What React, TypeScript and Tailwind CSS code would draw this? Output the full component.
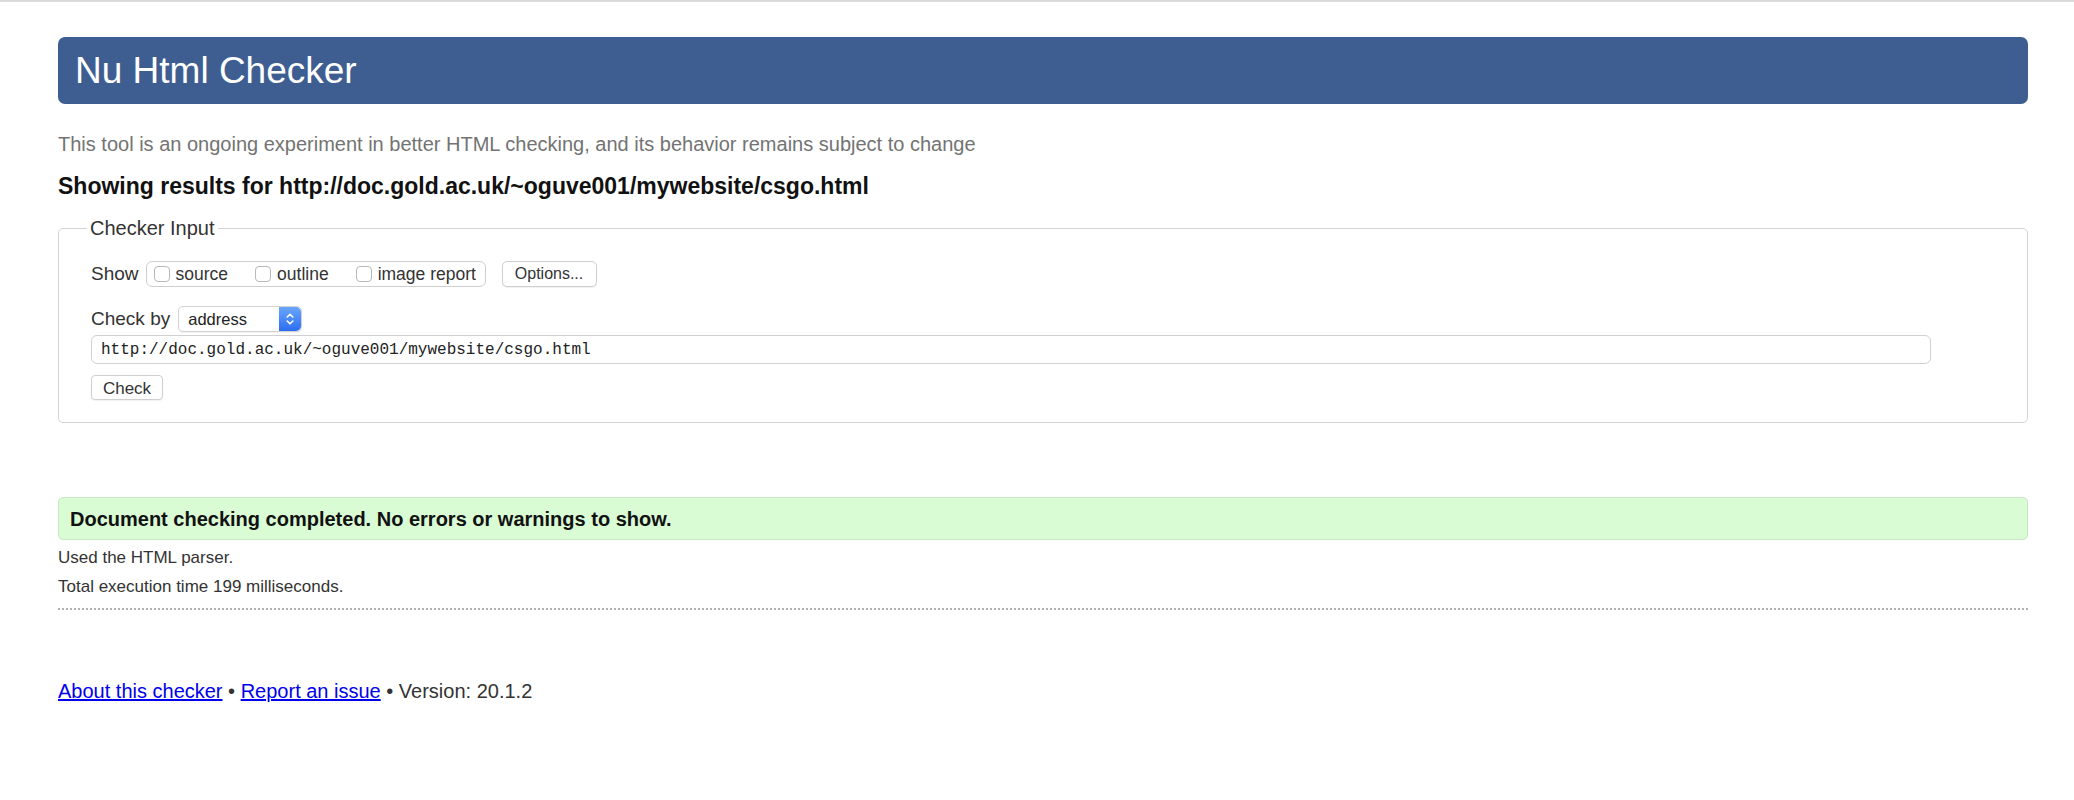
import { useState } from 'react';

const URL = 'http://doc.gold.ac.uk/~oguve001/mywebsite/csgo.html';

function Box({ label }: { label: string }) {
  return (
    <label className="flex items-center gap-[6px]">
      <span className="h-[16px] w-[16px] rounded-[4px] border border-[#b9b9b9] bg-white" />
      <span>{label}</span>
    </label>
  );
}

function Stepper() {
  return (
    <span className="flex h-full w-[22px] items-center justify-center rounded-r-[5px] bg-gradient-to-b from-[#6aa6fb] to-[#2c6cf0]">
      <svg width="8" height="14" viewBox="0 0 8 14" fill="none" stroke="white" strokeWidth={1.6} strokeLinecap="round" strokeLinejoin="round">
        <path d="M1.2 5L4 2.2 6.8 5" />
        <path d="M1.2 9L4 11.8 6.8 9" />
      </svg>
    </span>
  );
}

export default function App() {
  const [url] = useState(URL);

  return (
    <div className="min-h-screen bg-white font-['Liberation_Sans',Arial,sans-serif] text-[#222]">
      <div className="h-[2px] bg-[#dadada]" />

      <div className="ml-[58px] w-[1970px] pt-[35px]">
        {/* Title bar */}
        <h1 className="flex h-[67px] items-center rounded-[7px] bg-[#3e5e91] pl-[17px] text-[37px] text-white">
          Nu Html Checker
        </h1>

        <p className="mt-[28px] text-[20px] leading-[24px] text-[#737373]">
          This tool is an ongoing experiment in better HTML checking, and its behavior remains subject to change
        </p>

        <h2 className="mt-[16px] text-[23px] font-bold leading-[28px] text-[#111]">
          Showing results for {url}
        </h2>

        {/* Checker input */}
        <fieldset className="mt-[16px] rounded-[5px] border border-[#d4d4d4] pb-[21px] pl-[32px] pr-[96px]">
          <legend className="ml-[-4px] px-[3px] text-[20px] leading-[24px] text-[#333]">Checker Input</legend>

          <div className="mt-[21px] flex h-[26px] items-center">
            <span className="text-[19px] text-[#333]">Show</span>
            <div className="ml-[7px] flex h-[26px] w-[340px] items-center gap-[27px] rounded-[6px] border border-[#cfcfcf] pl-[7px] text-[17.5px] text-[#333]">
              <Box label="source" />
              <Box label="outline" />
              <Box label="image report" />
            </div>
            <button className="ml-[16px] h-[26px] w-[95px] rounded-[5px] border border-[#cfcfcf] bg-white text-[16px] text-[#333] shadow-[0_1px_1px_rgba(0,0,0,0.06)]">
              Options...
            </button>
          </div>

          <div className="mt-[19px] flex h-[26px] items-center">
            <span className="text-[19px] text-[#333]">Check by</span>
            <div className="ml-[8px] flex h-[26px] w-[124px] items-center justify-between rounded-[5px] border border-[#d2d2d2] bg-white pl-[9px] text-[16.5px] text-[#222] shadow-[0_1px_1px_rgba(0,0,0,0.06)]">
              <span>address</span>
              <Stepper />
            </div>
          </div>

          <div className="mt-[3px] flex h-[29px] items-center rounded-[6px] border border-[#d0d0d0] bg-white pl-[9px] font-['Liberation_Mono',monospace] text-[16px] text-[#222]">
            {url}
          </div>

          <button className="mt-[11px] h-[25px] w-[72px] rounded-[4px] border border-[#cfcfcf] bg-white text-[17px] text-[#333] shadow-[0_1px_1px_rgba(0,0,0,0.06)]">
            Check
          </button>
        </fieldset>

        {/* Result */}
        <div className="mt-[74px] flex h-[43px] items-center rounded-[5px] border border-[#c9e6c5] bg-[#d9fcd5] pl-[11px] text-[20px] font-bold text-[#111]">
          Document checking completed. No errors or warnings to show.
        </div>

        <p className="mt-[7px] text-[17px] leading-[22px] text-[#333]">Used the HTML parser.</p>
        <p className="mt-[7px] text-[17px] leading-[22px] text-[#333]">Total execution time 199 milliseconds.</p>

        <div className="mt-[10px] border-t-2 border-dotted border-[#b0b0b0]" />

        <p className="mt-[69px] text-[20px] leading-[24px] text-[#333]">
          <a href="#" className="text-[#0000ee] underline">About this checker</a>
          {' • '}
          <a href="#" className="text-[#0000ee] underline">Report an issue</a>
          {' • Version: 20.1.2'}
        </p>
      </div>
    </div>
  );
}
